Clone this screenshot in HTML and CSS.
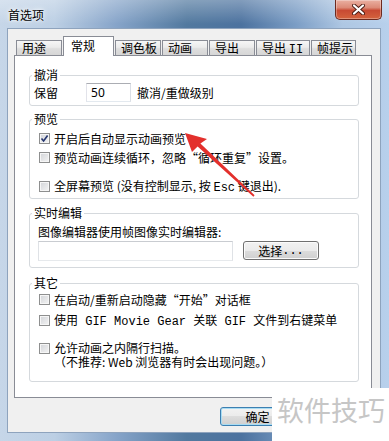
FILE: index.html
```html
<!DOCTYPE html>
<html lang="zh-CN">
<head>
    <meta charset="UTF-8">
    <title>首选项</title>
    <link rel="stylesheet" href="styles.css">
</head>
<body>

<div class="window">
    <div class="titlebar">
        <span class="title">首选项</span>
        <span class="close">
            <svg width="13" height="11" viewBox="0 0 13 11">
                <path d="M2 1.5 L11 9.5 M11 1.5 L2 9.5" stroke="#4a1a12" stroke-width="4" stroke-linecap="round"/>
                <path d="M2 1.5 L11 9.5 M11 1.5 L2 9.5" stroke="#fff" stroke-width="2.2" stroke-linecap="round"/>
            </svg>
        </span>
    </div>

    <div class="client">
        <div class="tabs">
            <span class="tab">用途</span>
            <span class="tab active">常规</span>
            <span class="tab">调色板</span>
            <span class="tab">动画</span>
            <span class="tab">导出</span>
            <span class="tab wide">导出 <span class="mono">II</span></span>
            <span class="tab narrow">帧提示</span>
        </div>

        <div class="panel">
            <fieldset class="group undo">
                <legend>撤消</legend>
                <div class="undo-row">
                    <span>保留</span>
                    <span class="textbox num">50</span>
                    <span>撤消/重做级别</span>
                </div>
            </fieldset>

            <fieldset class="group preview">
                <legend>预览</legend>
                <label class="check"><span class="cb"><svg width="9" height="9" viewBox="0 0 9 9"><path d="M1.5 4.5 L3.6 7 L7.6 1.5" stroke="#24346e" stroke-width="1.6" fill="none"/></svg></span><span>开启后自动显示动画预览</span></label>
                <label class="check"><span class="cb"></span><span>预览动画连续循环，忽略“循环重复”设置。</span></label>
                <label class="check spaced"><span class="cb"></span><span>全屏幕预览 (没有控制显示, 按 <span class="mono">Esc</span> 键退出).</span></label>
            </fieldset>

            <fieldset class="group live">
                <legend>实时编辑</legend>
                <div class="live-text">图像编辑器使用帧图像实时编辑器:</div>
                <div class="live-row">
                    <span class="textbox path"></span>
                    <span class="btn pick">选择<span class="mono">...</span></span>
                </div>
            </fieldset>

            <fieldset class="group other">
                <legend>其它</legend>
                <label class="check"><span class="cb"></span><span>在启动/重新启动隐藏“开始”对话框</span></label>
                <label class="check next"><span class="cb"></span><span>使用<span class="mono"> GIF Movie Gear </span>关联<span class="mono"> GIF </span>文件到右键菜单</span></label>
                <label class="check multi"><span class="cb"></span><span>允许动画之内隔行扫描。<br>（不推荐: Web 浏览器有时会出现问题。）</span></label>
            </fieldset>
        </div>

        <div class="footer">
            <span class="btn ok">确定</span>
        </div>
    </div>

    <svg class="arrow" width="389" height="441" viewBox="0 0 389 441">
        <polygon points="185,133 207,139 200.4,143.6 254.6,195.3 253.4,196.7 197.6,146.4 192,152" fill="#e3302c"/>
    </svg>

    <div class="watermark">软件技巧</div>
</div>

</body>
</html>
```

FILE: styles.css
```css
body {
    margin: 0;
    font-family: "Noto Sans CJK SC", "Noto Sans", sans-serif;
    font-size: 12px;
    color: #000;
    background: #fff;
}
.window {
    position: relative;
    width: 389px;
    height: 441px;
    display: flex;
    flex-direction: column;
    overflow: hidden;
    background:
        linear-gradient(180deg, rgba(255, 255, 255, 0.3) 0, rgba(255, 255, 255, 0) 24px),
        linear-gradient(90deg, #c6d6e8 0, #bccfe4 14%, #86a4c9 30%, #52799f 48%, #4c729f 62%, #7b9dc5 76%, #aec7e3 88%, #b8d0ec 100%);
}
.titlebar {
    height: 28px;
    display: flex;
    justify-content: space-between;
    align-items: flex-start;
    padding-left: 8px;
}
.title {
    margin-top: 7px;
    line-height: 16px;
    text-shadow: 0 0 6px #fff, 0 0 3px #fff;
}
.close {
    width: 47px;
    height: 20px;
    margin-right: 7px;
    box-sizing: border-box;
    border: 1px solid #6d2a1f;
    border-top: none;
    border-radius: 0 0 5px 5px;
    background: linear-gradient(#eab0a2 0, #dc8a77 40%, #c84a33 55%, #d4633d 100%);
    box-shadow: inset 0 0 0 1px rgba(255, 255, 255, 0.3);
    display: flex;
    align-items: center;
    justify-content: center;
}
.client {
    flex: 1;
    margin: 0 8px 8px 7px;
    background: #f0f0f0;
    border: 1px solid #8ea3bd;
    display: flex;
    flex-direction: column;
}
.mono {
    font-family: "Liberation Mono", monospace;
}

/* tabs */
.tabs {
    position: relative;
    z-index: 1;
    display: flex;
    align-items: flex-end;
    height: 19px;
    margin: 7px 0 0 8px;
}
.tab {
    box-sizing: border-box;
    width: 46px;
    height: 15px;
    margin-left: 1px;
    padding-left: 5px;
    line-height: 14px;
    white-space: nowrap;
    border: 1px solid #898c95;
    border-bottom: none;
    background: linear-gradient(#f6f6f6, #ebebeb 45%, #dedede 55%, #d6d6d6);
}
.tab:first-child {
    margin-left: 0;
}
.tab.active {
    width: 51px;
    height: 20px;
    margin-bottom: -1px;
    padding: 2px 0 0 7px;
    background: #fff;
}
.tab.wide {
    width: 54px;
}
.tab.narrow {
    width: 45px;
}

.panel {
    height: 343px;
    margin: 0 8px 0 6px;
    box-sizing: border-box;
    border: 1px solid #898c95;
    background: #fff;
    padding-top: 12px;
}

/* group boxes */
.group {
    width: 330px;
    margin: 0 0 0 14px;
    padding: 0;
    box-sizing: border-box;
    min-inline-size: 0;
    border: 1px solid #d5d9dd;
    border-radius: 3px;
}
.group legend {
    margin-left: 2px;
    padding: 0 2px;
    line-height: 14px;
}
.undo {
    padding-bottom: 3px;
}
.undo-row {
    display: flex;
    align-items: center;
    height: 20px;
    padding-left: 4px;
}
.textbox {
    box-sizing: border-box;
    display: flex;
    align-items: center;
    padding-left: 4px;
    background: #fff;
    border: 1px solid;
    border-color: #abadb3 #dbdfe6 #e3e9ef #e2e3ea;
    font-family: "Noto Sans", sans-serif;
}
.textbox.num {
    width: 45px;
    height: 19px;
    margin: 0 6px 0 28px;
}
.preview {
    margin-top: 6px;
    padding: 3px 0 2px;
}
.check {
    display: flex;
    align-items: center;
    height: 19px;
    line-height: 19px;
    padding-left: 9px;
    white-space: nowrap;
}
.check.spaced {
    margin-top: 10px;
}
.cb {
    box-sizing: border-box;
    width: 11px;
    height: 11px;
    margin-right: 4px;
    flex: none;
    border: 1px solid #8e8f8f;
    background: linear-gradient(135deg, #d2d4d8, #f4f4f4);
    box-shadow: inset 0 0 0 1px #f6f6f6;
    display: flex;
    align-items: center;
    justify-content: center;
}
.live {
    margin-top: 7px;
    padding: 4px 0 6px;
}
.live-text {
    padding-left: 8px;
    line-height: 16px;
}
.live-row {
    display: flex;
    align-items: flex-start;
    height: 20px;
    margin-top: 1px;
    padding-left: 8px;
}
.textbox.path {
    width: 195px;
    height: 20px;
    border-color: #c9ccd1 #dfe2e6 #e6e9ec #dfe2e6;
}
.btn {
    box-sizing: border-box;
    height: 19px;
    display: flex;
    align-items: center;
    justify-content: center;
    border: 1px solid #707070;
    border-radius: 3px;
    background: linear-gradient(#f2f2f2 0, #ebebeb 50%, #dddddd 50%, #cfcfcf 100%);
    box-shadow: inset 0 0 0 1px #fbfbfb;
}
.btn.pick {
    width: 76px;
    margin-left: 10px;
}
.other {
    margin-top: 8px;
    padding: 0 0 12px;
}
.check.next {
    margin-top: 2px;
}
.check.multi {
    height: auto;
    align-items: flex-start;
    line-height: 14px;
    margin-top: 11px;
}
.check.multi .cb {
    margin-top: 1.5px;
}

.footer {
    display: flex;
    padding: 9px 0 0 212px;
}
.btn.ok {
    width: 75px;
    border-color: #3c7fb1;
    box-shadow: inset 0 0 0 1px #a8dcf3;
}

/* overlays */
.arrow {
    position: absolute;
    left: 0;
    top: 0;
    pointer-events: none;
}
.watermark {
    position: absolute;
    left: 272px;
    top: 388px;
    width: 117px;
    height: 53px;
    box-sizing: border-box;
    padding: 6px 0 0 5px;
    background: #fff;
    color: #c6c6c6;
    font-size: 27px;
    line-height: 32px;
    white-space: nowrap;
}
```
